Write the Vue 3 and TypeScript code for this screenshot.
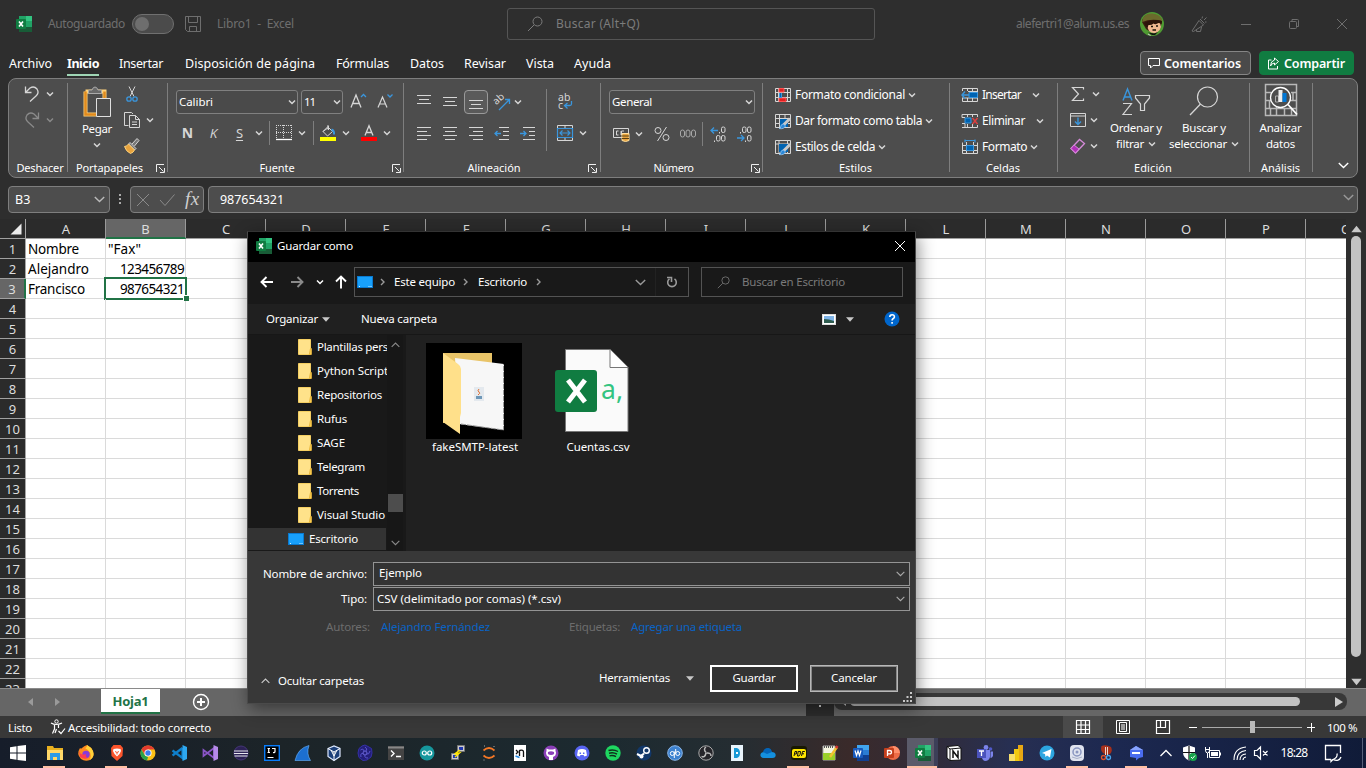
<script setup lang="ts">
import { h } from 'vue'
import type { Directive, FunctionalComponent } from 'vue'

/* Icon drawings, keyed by name: [viewBox width, viewBox height, markup] */
const art: Record<string, [number, number, string]> = {
  excel: [16, 16, '<g stroke="none"><path fill="#21a366" d="M3 0h13v5H3z"/><path fill="#33c481" d="M10 0h6v5h-6z"/><path fill="#107c41" d="M3 5h7v6H3z"/><path fill="#21a366" d="M10 5h6v6h-6z"/><path fill="#185c37" d="M3 11h13v5H3z"/><rect y="3" width="10" height="10" rx="1" fill="#107c41"/></g><path d="M3 5.500l4 5M7 5.500l-4 5" stroke="#fff" stroke-width="1.600"/>'],
  save: [16, 16, '<path d="M.5.5h15v15H2.500l-2-2zM3.500.5v6h9v-6M4.500 15.500v-5h7v5"/>'],
  search: [16, 16, '<circle cx="10.500" cy="5.500" r="4.500"/><path d="M7 9L1 15"/>'],
  horn: [16, 16, '<path d="M1 15L8 4.500l4.500 4.500L2.500 15.500zM5.500 14v1.500h4l1-4.500M9 3l4.500 4.500M11 2.500l.5-2M13 4l2.500-2.500M14 6h1.500"/>'],
  min: [12, 12, '<path d="M1 6.500h10"/>'],
  restore: [12, 12, '<rect x="1.500" y="3.500" width="7" height="7" rx="1"/><path d="M4 3.500v-2h5.500q1 0 1 1V8.500H9"/>'],
  close: [12, 12, '<path d="M1 1l10 10M11 1L1 11"/>'],
  comment: [12, 12, '<path d="M.5 1.500h11v7H5l-2.500 2.500v-2.500h-2z"/>'],
  share: [13, 13, '<path d="M4.500 3H1.500v9h9V9M7.500 1l4 3.500-4 3.500V6Q5 6 3.500 9q0-5 4-6z"/>'],
  chev: [8, 6, '<path d="M1 1.500l3 3 3-3" stroke-width="1.500"/>'],
  chevBig: [11, 7, '<path d="M.8 1l4.700 4.600L10.200 1" stroke-width="1.400"/>'],
  undo: [16, 16, '<path d="M1.500.5v6h6M1.500 6.500L6 2Q10-.5 13 3q2.500 4-1 7l-6 5.500" stroke-width="1.300"/>'],
  redo: [16, 16, '<path d="M14.500.5v6h-6M14.500 6.500L10 2Q6-.5 3 3q-2.500 4 1 7l6 5.500" stroke-width="1.300"/>'],
  paste: [30, 32, '<path d="M3.500 5.500v23h11M22.500 14V5.500h-19" stroke="#ffd27a" stroke-width="4"/><path d="M3.500 5.500v23h11M22.500 12V5.500" stroke="#e08a1e" stroke-width="2.500"/><path d="M6.500 7.500V5q0-1 1-1H10q1-3 3-3t3 3h2.500q1 0 1 1v2.500z" fill="#6a6a6a" stroke="#aaa"/><path d="M14.500 12.500h14v18h-14z" fill="#4d4d4d" stroke="#e0e0e0"/>'],
  cut: [16, 16, '<path d="M5 .5l5 10M11 .5l-5 10"/><g stroke="#3a96dd" stroke-width="1.300"><circle cx="5" cy="13" r="2.200"/><circle cx="11" cy="13" r="2.200"/></g>'],
  copy: [16, 16, '<path d="M4.500 13.500H.5V.5h7l1.500 1.500M5.500 3.500h6l4 4v8h-10zM11.500 3.500v4h4M8 10h5M8 12.500h5"/>'],
  brush: [16, 16, '<path d="M8 6l5-5.500 2 2L10.500 8M6 4.500l6 6-1.500 1.500L4.500 6z" fill="#777"/><path d="M4.500 6Q3 8.500.5 8.500q1.500 5 6 7 3-1 4-3.500z" fill="#e8a33d" stroke="#ffd27a"/>'],
  launch: [9, 9, '<path d="M8 .5H.5V8M3 3l4.500 4.500M8.500 4v4.500H4" stroke="#eee"/>'],
  growA: [17, 16, '<path d="M1 14.500L6 2l5 12.500M2.700 10.500h6.600" stroke-width="1.300"/><path d="M11 4l2.500-2.500L16 4" stroke="#3a96dd" stroke-width="1.300"/>'],
  shrinkA: [16, 16, '<path d="M1 14.500L5.500 4 10 14.500M2.500 11h6" stroke-width="1.200"/><path d="M10.500 1.500L13 4l2.500-2.500" stroke="#3a96dd" stroke-width="1.300"/>'],
  borders: [16, 16, '<g stroke-dasharray="1 1"><path d="M0 .5h16M0 7.500h16M.5 0v14M7.500 0v14M15.500 0v14"/></g><path d="M0 14.500h16" stroke="#fff" stroke-width="1.300"/>'],
  fill: [16, 16, '<path d="M3 6.500L8.500 1v4M8.500 2.500l4 4-5 4.500-4.500-4.500zM8 0v4.500"/><path d="M11.500 4.500q3 1 2.500 5" stroke="#3a96dd" stroke-width="2"/><path d="M0 14h16" stroke="#ff0" stroke-width="4"/>'],
  fontColor: [16, 16, '<path d="M4 10.500L8 .8l4 9.700M5.400 7.500h5.200" stroke-width="1.300"/><path d="M0 14h16" stroke="#f00" stroke-width="4"/>'],
  aTop: [16, 16, '<path d="M1 1.500h14M3 5.500h10M1 9.500h14"/>'],
  aMid: [16, 16, '<path d="M1 3.500h14M3 7.500h10M1 11.500h14"/>'],
  aBot: [16, 16, '<path d="M1 6.500h14M3 10.500h10M1 14.500h14"/>'],
  left: [16, 16, '<path d="M1 1.500h14M1 5.500h10M1 9.500h14M1 13.500h10"/>'],
  center: [16, 16, '<path d="M1 1.500h14M3 5.500h10M1 9.500h14M3 13.500h10"/>'],
  right: [16, 16, '<path d="M1 1.500h14M5 5.500h10M1 9.500h14M5 13.500h10"/>'],
  outdent: [16, 16, '<path d="M5 1.500h10M9 5.500h6M9 9.500h6M5 13.500h10"/><path d="M1 7.500h6M3.500 5L1 7.500 3.500 10" stroke="#3a96dd" stroke-width="1.300"/>'],
  indent: [16, 16, '<path d="M3 1.500h12M9 5.500h6M9 9.500h6M3 13.500h12"/><path d="M0 7.500h6M3.500 5L6 7.500 3.500 10" stroke="#3a96dd" stroke-width="1.300"/>'],
  orient: [18, 18, '<text x="1" y="10" transform="rotate(-42 5 8)" font-size="10" fill="#d6d6d6" stroke="none">ab</text><path d="M6 17L16.500 6.500M12 6.500h4.500V11" stroke="#3a96dd" stroke-width="1.300"/>'],
  wrap: [16, 18, '<g font-size="10.500" fill="#d6d6d6" stroke="none"><text x="1" y="8">ab</text><text x="1" y="16">c</text></g><path d="M14.500 8v3q0 1.500-2 1.500H7.500M10.500 10l-3 2.500 3 3" stroke="#3a96dd" stroke-width="1.300"/>'],
  merge: [16, 16, '<path d="M.5 3V.5h15V3M8 0v3M.5 12v3.500h15V12M8 12v3.500"/><path d="M.5 3.500h15v9H.5zM3 8h10M5.500 5.500L3 8l2.500 2.500M10.500 5.500L13 8l-2.500 2.500" stroke="#3a96dd" stroke-width="1.200"/>'],
  money: [17, 16, '<path d="M.5 2.500h15v9H.5zM5.500 5h-2v4h2M8 5v4M11 5H8.500v4"/><path d="M9 7.500h7v7q-3.500 2-7 0z" fill="#e8a33d" stroke="#ffe0a0"/><path d="M9 10h7M9 12.500h7" stroke="#5a4010"/>'],
  percent: [16, 16, '<circle cx="4" cy="4.500" r="3"/><circle cx="12" cy="11.500" r="3"/><path d="M12.500 1l-9 14"/>'],
  thousand: [16, 10, '<g stroke="#a8a8a8"><rect x=".5" y="1" width="4" height="7" rx="2"/><rect x="6" y="1" width="4" height="7" rx="2"/><rect x="11.500" y="1" width="4" height="7" rx="2"/></g>'],
  incDec: [16, 16, '<path d="M1 4.500h7M4 1.500l-3 3 3 3" stroke="#3a96dd" stroke-width="1.300"/><rect x="11.500" y="1" width="3.500" height="5.500" rx="1.500"/><rect x="6.500" y="9.500" width="3.500" height="5.500" rx="1.500"/><rect x="11.500" y="9.500" width="3.500" height="5.500" rx="1.500"/><path d="M9.500 6v1.500M4.500 14.500v1.500"/>'],
  decDec: [16, 16, '<path d="M1 12h7M5 9l3 3-3 3" stroke="#3a96dd" stroke-width="1.300"/><rect x="6.500" y="1" width="3.500" height="5.500" rx="1.500"/><rect x="11.500" y="1" width="3.500" height="5.500" rx="1.500"/><rect x="11.500" y="9.500" width="3.500" height="5.500" rx="1.500"/><path d="M4.500 6v1.500M9.500 14.500v1.500"/>'],
  cond: [16, 16, '<path d="M.5 1.500h15v13H.5zM3.500 1v14M12.500 1v14M0 5.500h16M0 10.500h16"/><path d="M4 1.500h5v3.500H4zM4 11h7v3.500H4z" fill="#e02020" stroke="#ff5050"/><path d="M4.500 6v4.500h2V6" fill="#0063b1" stroke="#3a96dd"/>'],
  table: [16, 16, '<path d="M.5 1.500h15v13H.5zM4.500 1v14M10 1v14M0 5.500h16M0 10.500h16"/><path d="M5 6h8v8H5z" fill="#0063b1" stroke="none"/><path d="M15 5.500L8.500 12" stroke="#c8c8c8" stroke-width="3"/><path d="M8.500 11q-3 0-3 3.500l-1.500 1q5 1 6.500-2.500z" fill="#2b88d8" stroke="#9fd0f8" stroke-width=".7"/>'],
  cellStyle: [16, 16, '<path d="M.5 1.500h15v13H.5zM4 1v14M12.500 1v14M0 5h16"/><path d="M4 5h9v8H4z" fill="#0063b1" stroke="none"/><path d="M15 5.500L8.500 12" stroke="#c8c8c8" stroke-width="3"/><path d="M8.500 11q-3 0-3 3.500l-1.500 1q5 1 6.500-2.500z" fill="#2b88d8" stroke="#9fd0f8" stroke-width=".7"/>'],
  insert: [16, 16, '<path d="M.5 4V1.500h15v13H.5V11M5.500 1v3M10.500 1v13M5.500 11v3.500M0 11h16M6 4.500h10"/><path d="M7 5.500h8.500v5H7z" fill="#0063b1" stroke="#3a96dd"/><path d="M0 8h7M3 4.500L0 8l3 3.500" stroke="#3a96dd" stroke-width="1.400"/>'],
  del: [16, 16, '<path d="M0 4.500h3M0 1.500v3M0 10.500h3v4M0 1.500h15.500V4M0 14.500h15.500V12M5.500 1v3M10.500 1v3M5.500 11v4M10.500 11v4"/><path d="M3 5h6v5H3z" fill="#0063b1" stroke="#3a96dd"/><path d="M10.500 5l5 6M15.500 5l-5 6" stroke="#e04040" stroke-width="1.400"/>'],
  format: [16, 16, '<path d="M.5 3.500v11h15v-11M4.500 3v12M11.500 3v12M0 6.500h16M0 11.500h16"/><path d="M4.500 6.500h7v5h-7z" fill="#0063b1" stroke="#3a96dd"/><path d="M3 .5v3M13 .5v3M3 1.500h10" stroke="#3a96dd" stroke-width="1.200"/>'],
  sum: [16, 16, '<path d="M13.500 3.500v-2h-11L8.500 8l-6 6.500h11v-2" stroke-width="1.200"/>'],
  down: [16, 16, '<path d="M.5 1.500h15v13H.5zM.5 4h15"/><path d="M8 5.500v7M5 9.500l3 3 3-3" stroke="#3a96dd" stroke-width="1.400"/>'],
  eraser: [16, 16, '<path d="M1 10.500L9.500 1.500l5 4-9 9.500z" stroke="#d48ad8" stroke-width="1.300"/><path d="M1 10.500l3-3.500 5 4-3.500 4z" fill="#b030b8" stroke="#d48ad8"/>'],
  sort: [30, 28, '<path d="M2 12.500L6.500 1 11 12.500M3.500 9h6" stroke="#3a96dd" stroke-width="1.400"/><path d="M2 15.500h8.500L2 26.500h9" stroke-width="1.200"/><path d="M14.500 7.500h14v2.500l-5 6v6.500h-4V16l-5-6z" stroke-width="1.200"/>'],
  find: [30, 30, '<circle cx="18.500" cy="11" r="10" stroke-width="1.200"/><path d="M11.500 18L1 29" stroke-width="1.300"/>'],
  analyze: [34, 34, '<path d="M1.500 1.500h31v31h-31zM1 9.500h6M27 9.500h6M1 17.500h6M26 17.500h7M1 25.500h32M6.500 25v7M12.500 24v8M20.500 26v6M27.500 26v6M5.500 18v8M29 10v8" stroke="#b8b8b8" stroke-width="1.500"/><circle cx="16.500" cy="14.500" r="10" fill="#4d4d4d" stroke="#fff" stroke-width="1.300"/><path d="M11.500 13h3v6h-3z" stroke="#aaa"/><path d="M14.500 7h4v12h-4z" fill="#eee" stroke="none"/><path d="M18.500 10h4v9h-4z" fill="#0078d7" stroke="none"/><path d="M24 21.500l9 10" stroke="#fff" stroke-width="1.800"/>'],
  check: [16, 14, '<path d="M1 7l5 5.500L15.500 1.500"/>'],
  cross: [14, 14, '<path d="M1 1l12 12M13 1L1 13"/>'],
  fx: [16, 18, '<text x="1" y="14" font-size="19" font-style="italic" fill="#d0d0d0" stroke="none">fx</text>'],
  corner: [12, 12, '<path d="M11.500.5v11H.5z" fill="#ececec" stroke="none"/>'],
  back: [14, 14, '<path d="M13 7H1.500M6.500 2l-5 5 5 5" stroke-width="1.900"/>'],
  fwd: [14, 14, '<path d="M1 7h11.500M7.500 2l5 5-5 5" stroke-width="1.900"/>'],
  up: [14, 14, '<path d="M7 13.500V1.500M2 6.500l5-5 5 5" stroke-width="1.900"/>'],
  gt: [5, 8, '<path d="M1 1l3 3-3 3" stroke-width="1.400"/>'],
  monitor: [16, 12, '<rect x=".5" y=".5" width="15" height="11" fill="#18a0fb" stroke="#0a7ad0"/><path d="M2 10.500h1M11.500 10.500h1M13.500 10.500h1" stroke="#cfefff"/>'],
  refresh: [12, 12, '<path d="M3.500 2.800A4.300 4.300 0 1 0 8.500 2.800M1 1.500h4.500V6" stroke-width="1.600"/>'],
  tri: [8, 5, '<path d="M0 .3h8L4 4.800z" fill="#c8c8c8" stroke="none"/>'],
  view: [14, 11, '<rect x=".5" y=".5" width="13" height="10" fill="#fff" stroke="#ddd"/><path d="M2 2h10v7H2z" fill="#7fb4e8" stroke="none"/><path d="M2 5q5 0 10 2v2H2z" fill="#2f5d50" stroke="none"/>'],
  help: [16, 16, '<circle cx="8" cy="8" r="7.500" fill="#0066cc" stroke="none"/><path d="M5.800 6q0-2.300 2.300-2.300T10.400 6Q10.400 7 9 7.800 8.100 8.300 8.100 9.500M8.100 11v1.700" stroke="#fff" stroke-width="1.600"/>'],
  folder: [14, 16, '<path d="M.5.500h12v15H.500z" fill="#ffe28a" stroke="#f5cf62"/><path d="M12.500 9.500h.8v6h-2z" fill="#ffd45a" stroke="#eab93f"/>'],
  bigFolder: [96, 96, '<path d="M0 0h96v96H0z" fill="#000" stroke="none"/><g stroke="none"><path d="M17 10h49v70H17z" fill="#e9c468"/><path d="M29 15l49 6v66l-45-6z" fill="#f7f7f7"/><path d="M17 10l15 11q3 2 3 5v44l-1 4v17L17 79z" fill="#ffe08a"/><path d="M48 44h10v14H48z" fill="#e4e9ee"/><path d="M50 53h6v3h-6z" fill="#6f98b8"/></g><path d="M53 46q-2 2 0 3t-1 3" stroke="#e07030"/><path d="M35 81l42.500 6V21" stroke="#999" stroke-dasharray="5 1"/>'],
  csv: [80, 90, '<path d="M13.500 2.500H58L76 20.500v64H13.500z" fill="#fafafa" stroke="#777"/><path d="M58 2.500v18h18" fill="#fff" stroke="#777"/><rect x="3" y="23" width="42" height="42" rx="3" fill="#107c41" stroke="none"/><path d="M16 33l17 22M33 33L16 55" stroke="#fff" stroke-width="5"/><text x="49" y="52" font-size="27" textLength="22" lengthAdjust="spacingAndGlyphs" fill="#33c481" stroke="none">a,</text>'],
  grip: [10, 10, '<path d="M7 0h2v2H7zM7 4h2v2H7zM3.500 4h2v2h-2zM7 8h2v2H7zM3.500 8h2v2h-2zM0 8h2v2H0z" fill="#c8c8c8" stroke="none"/>'],
  triL: [5, 8, '<path d="M5 0v8L0 4z" fill="currentColor" stroke="none"/>'],
  triR: [5, 8, '<path d="M0 0v8l5-4z" fill="currentColor" stroke="none"/>'],
  plus: [18, 18, '<circle cx="9" cy="9" r="7.500" stroke-width="1.400"/><path d="M9 5v8M5 9h8" stroke-width="2"/>'],
  access: [16, 16, '<circle cx="6.500" cy="2.500" r="1.700"/><path d="M1 4q5 3 11 0M4.500 6v4l-2 4.500M8.500 6v3M6.500 10l-1.500 4M8.500 12l2.500 2.500 4-5" stroke-width="1.200"/>'],
  vGrid: [14, 14, '<path d="M.5.5h13v13H.5zM5 0v14M9.500 0v14M0 5h14M0 9.500h14" stroke-width="1.200"/>'],
  vPage: [14, 14, '<path d="M.5.5h13v13H.5zM3.500 2.500h7v9h-7zM5 5h4M5 7h4M5 9h4"/>'],
  vBreak: [14, 14, '<path d="M.5.5h13v13H.5zM4.500.5v7h5v-7M.5 7.500h4" stroke-width="1.200"/>'],
  win: [16, 16, '<path d="M0 2.200l6.500-.9v6.200H0zM7.500 1.100L16 0v7.500H7.500zM0 8.500h6.500v6.200L0 13.800zM7.500 8.500H16V16l-8.500-1.100z" fill="#fff" stroke="none"/>'],
  explorer: [16, 16, '<g stroke="none"><path d="M0 1h6l1 2h9v12H0z" fill="#e8b020"/><path d="M0 5h16v10H0z" fill="#ffd869"/><path d="M3 8h10v7h-3v-3H6v3H3z" fill="#2b9be8"/></g>'],
  firefox: [16, 16, '<g stroke="none"><path d="M2 3q1 1 2 0 2-2 5-3 4 2 6 6 2 6-3 9-5 2-9-1-5-5-1-11z" fill="#ff8a1e"/><path d="M9 0q4 2 6 6 2 6-3 9 3-8-5-12 2 0 2-3z" fill="#ffd23a"/><circle cx="8" cy="9.500" r="3.700" fill="#8a3ad8"/><path d="M1 5q1 6 7 4-1 3 2 4-4 2-8-1z" fill="#ff3d50"/></g>'],
  brave: [16, 16, '<path d="M4.500 0h7L14 3l-.5 8L8 16l-5.500-5L2 3z" fill="#fb542b" stroke="none"/><path d="M8 3.500L4.500 4l-.5 2 1.500 3L8 11.500 10.500 9 12 6l-.5-2z" fill="#fff" stroke="none"/><path d="M6 6.500l2 1 2-1M8 7.500v2" stroke="#fb542b"/>'],
  chrome: [16, 16, '<g stroke="none"><circle cx="8" cy="8" r="7.500" fill="#fbc116"/><path d="M1.500 4.300A7.500 7.500 0 0 1 14.600 4.500H8L4.700 9.500z" fill="#e33b2e"/><path d="M1.300 4.500L5 10.500 8 12l-1 3.500A7.500 7.500 0 0 1 1.300 4.500z" fill="#2aa24c"/><circle cx="8" cy="8" r="3.600" fill="#fff"/><circle cx="8" cy="8" r="2.700" fill="#3b7ded"/></g>'],
  vscode: [16, 16, '<path d="M11.500 3v10L1.500 5.500M11.500 3L1.500 10.500" stroke="#0f80cc" stroke-width="2.200"/><path d="M11.500 0L16 2v12l-4.500 2z" fill="#2ea8f0" stroke="none"/>'],
  vs: [16, 16, '<path d="M12 3v10L1.500 5v6z" stroke="#8a55c8" stroke-width="1.800"/><path d="M11.500 0L16 2v12l-4.500 2z" fill="#b58ae8" stroke="none"/>'],
  eclipse: [16, 16, '<circle cx="8" cy="8" r="7" fill="#2c2255" stroke="#443577"/><path d="M1 6h14M1 8.500h14M1.500 11h13" stroke="#e8e8f0" stroke-width="1.200"/>'],
  idea: [16, 16, '<rect x=".7" y=".7" width="14.600" height="14.600" fill="#000" stroke="#087cfa" stroke-width="1.400"/><path d="M3.500 3.500H6M4.700 3.500v4M3.500 7.500H6M8 3.500h3v3.200q0 1-2 .8M3.500 12.500h6" stroke="#fff" stroke-width="1.200"/>'],
  shark: [16, 16, '<path d="M0 15.500Q3 3 14 .5q-3 8 1.500 15z" fill="#1c6fd0" stroke="#69b5ff" stroke-width=".6"/>'],
  vbox: [16, 16, '<path d="M2 3.500L8 1l6 2.500v8L8 15.500l-6-4z" fill="#1c3f78" stroke="#dce8ff" stroke-width="1.200"/><path d="M2 3.500L8 7l6-3.500M8 7v8.500M5 5l3 6 3-6" stroke="#fff"/>'],
  flower: [16, 16, '<path d="M8 0l3 1.500 3.500 2L15 8l-1 4-4 3-4 .5L2 12.500 1 8l1-4.500L5 1z" fill="#241f7a" stroke="#3530a8"/><circle cx="8" cy="8" r="2" stroke="#6a66d8"/><path d="M8 2q3 2 1 4M13 6q-1 4-3.500 3M11 13q-4 0-3-3M4 12q-1-4 2-3.500M3.500 5q3-2 3.500 1" stroke="#5a55d0"/>'],
  term: [16, 16, '<path d="M0 1h16v14H0z" fill="#444" stroke="none"/><path d="M0 2.500h16" stroke="#888" stroke-width="2"/><path d="M3 5.500l3 3-3 3M8 11.500h5" stroke="#fff" stroke-width="1.400"/>'],
  arduino: [16, 16, '<circle cx="8" cy="8" r="7.500" fill="#16979d" stroke="none"/><circle cx="5.300" cy="8" r="2" stroke="#fff" stroke-width="1.200"/><circle cx="10.700" cy="8" r="2" stroke="#fff" stroke-width="1.200"/>'],
  putty: [16, 16, '<path d="M7.500.5h7v6h-7zM1.500 8.500h7v6h-7z" fill="#ccc" stroke="#777"/><path d="M9 2h4v3H9zM3 10h4v3H3z" fill="#2038b0" stroke="none"/><path d="M10 5L4.500 9l5-1L5 12" stroke="#ffe600" stroke-width="1.400"/>'],
  jupyter: [16, 16, '<path d="M2.500 5.500q5.500-5 11 0M2.500 10.500q5.500 5 11 0" stroke="#f37726" stroke-width="1.700"/><path d="M3 1h1M12.500 1.500h1M2.500 15h1" stroke="#aaa"/>'],
  jn: [16, 16, '<path d="M2 0h12v16H2z" fill="#fff" stroke="none"/><path d="M7.500 11V5M7.500 5.500q4-1 4 1.500v5M4 5l2 2-2 2" stroke="#111" stroke-width="1.300"/><path d="M3.500 11l4 1.500" stroke="#1e88e5" stroke-width="1.500"/>'],
  github: [16, 16, '<circle cx="8" cy="8" r="7.500" fill="#8a3fb8" stroke="none"/><path d="M6 15v-3q-3-1-3-4.500l.5-1.500V3.500L6 4.500h4l2.500-1V6l.5 1.500q0 3.500-3 4.500v3z" fill="#fff" stroke="none"/><path d="M5 7q3-1.500 6 0 1 3-3 3T5 7z" fill="#8a3fb8" stroke="none"/>'],
  discord: [16, 16, '<circle cx="8" cy="8" r="7.500" fill="#5865f2" stroke="none"/><path d="M4 5q4-2 8 0l1 5.500-2.500 1-1-1.500h-3l-1 1.500-2.500-1z" fill="#fff" stroke="none"/><path d="M6.300 7.500v1.500M9.700 7.500v1.500" stroke="#5865f2" stroke-width="1.500"/>'],
  spotify: [16, 16, '<circle cx="8" cy="8" r="7.700" fill="#1ed760" stroke="none"/><path d="M3.500 5.500q5-1.500 9.500 1M4 8.200q4.500-1.200 8 1M4.500 10.800q3.500-1 6.500.8" stroke="#10301c" stroke-width="1.400"/>'],
  steam: [16, 16, '<circle cx="8" cy="8" r="7.500" fill="#12386a" stroke="none"/><circle cx="10.500" cy="5.500" r="2.800" fill="#12386a" stroke="#fff" stroke-width="1.400"/><path d="M1 9l4 2 3-2.500" stroke="#fff" stroke-width="2"/><circle cx="5.500" cy="11.500" r="2" fill="#fff" stroke="none"/>'],
  qb: [16, 16, '<circle cx="8" cy="8" r="7.300" fill="#3d82d0" stroke="#8cb8ea"/><circle cx="5.300" cy="8.500" r="2" stroke="#fff"/><circle cx="10.700" cy="8.500" r="2" stroke="#fff"/><path d="M7.300 6.500V13M8.700 4v5" stroke="#fff"/>'],
  obs: [16, 16, '<circle cx="8" cy="8" r="7.200" fill="#26252a" stroke="#aaa"/><path d="M8 2q-3 2 0 5.500M13 11Q13 7.500 8.500 8M3.500 11.500q3.500 1.500 4.500-3.500" stroke="#bbb" stroke-width="1.500"/>'],
  dd: [16, 16, '<path d="M2 0h12v16H2z" fill="#e8f4fc" stroke="none"/><path d="M5 3h3q3 1 3 5t-3 5H5z" fill="#1899d6" stroke="none"/><path d="M7 8h2" stroke="#fff" stroke-width="2"/>'],
  cloud: [16, 16, '<path d="M3.500 13q-3.500-.5-3-3.500Q1 7 4 7q1-4 4.500-3.500Q11 4 11.500 7q4 0 4.200 3 0 3-3.200 3z" fill="#1490df" stroke="none"/><path d="M3 7q1-4 5-4 3 0 4 4l-5 2z" fill="#0364b8" stroke="none"/>'],
  pdf: [16, 16, '<rect x="0" y="1" width="16" height="14" rx="3" fill="#191900" stroke="none"/><rect x="1" y="4" width="14" height="9" rx="2" fill="#ffe600" stroke="none"/><path d="M3 11l1-4.500h1.800l-.5 2.500H4M7.200 6.500L6.500 11H8q1.500-1 1.500-4.500zM10.500 11l1-4.500h2.300M11 8.800h2" stroke="#111"/>'],
  note: [16, 16, '<path d="M1 1h12v14H1z" fill="#f4f4e0" stroke="#aaa"/><path d="M1 8h12v7H1z" fill="#9ad02a" stroke="none"/><path d="M2 2h10" stroke="#555" stroke-width="2" stroke-dasharray="1 1"/><path d="M15 2L8 12" stroke="#f2c230" stroke-width="2.500"/><path d="M15.500 1L14 3" stroke="#d03030" stroke-width="2.500"/>'],
  word: [16, 16, '<g stroke="none"><path fill="#41a5ee" d="M4 0h12v5H4z"/><path fill="#2b7cd3" d="M4 5h12v5H4z"/><path fill="#103f91" d="M4 10h12v6H4z"/><rect y="3" width="10" height="10" rx="1" fill="#185abd"/></g><path d="M2 5.500l1.500 5L5 6l1.500 4.500L8 5.500" stroke="#fff" stroke-width="1.200"/>'],
  ppt: [16, 16, '<circle cx="9" cy="8" r="7" fill="#ed6c47" stroke="none"/><path d="M9 1v7h7a7 7 0 0 0-7-7z" fill="#ff8f6b" stroke="none"/><rect y="3" width="10" height="10" rx="1" fill="#c43e1c" stroke="none"/><path d="M3.500 11V5.500h2q2 0 2 1.700t-2 1.700h-2" stroke="#fff" stroke-width="1.300"/>'],
  notion: [16, 16, '<path d="M1 1.500l11-1L15 3v12l-11 .5L1 13z" fill="#fff" stroke="#111"/><path d="M1 1.500L4 4v11.500M4 4l11-1" stroke="#111"/><path d="M7 13V6l5 6.500V5.500" stroke="#111" stroke-width="1.500"/>'],
  teams: [16, 16, '<circle cx="13.500" cy="4" r="1.800" fill="#5059c9" stroke="none"/><circle cx="9" cy="2.500" r="2.400" fill="#7b83eb" stroke="none"/><path d="M5 5h8v7q-1 4-5 4-3-1-3-4zM13.500 6.500H16V11q-1 2-2.500 2z" fill="#7b83eb" stroke="none"/><path d="M0 4h9v9H0z" fill="#4b53bc" stroke="none"/><path d="M2 6h5M4.500 6v5" stroke="#fff" stroke-width="1.300"/>'],
  pbi: [16, 16, '<path d="M10 0h5v16h-5z" fill="#e8a813" stroke="none"/><path d="M6 4h5v12H6z" fill="#f2c811" stroke="none"/><path d="M1 9h6v7H1z" fill="#f8df6a" stroke="none"/>'],
  telegram: [16, 16, '<circle cx="8" cy="8" r="7.500" fill="#2ca5e0" stroke="none"/><path d="M3 8l9.500-4L11 12.500 8 10.500 6.500 12 6 9z" fill="#fff" stroke="none"/>'],
  shieldApp: [16, 16, '<rect x="1" width="14" height="16" rx="4" fill="#dfe3ee" stroke="none"/><circle cx="8" cy="7" r="4" stroke="#8a96c0" stroke-width="1.500"/><circle cx="8" cy="7" r="1.500" fill="#8a96c0" stroke="none"/><path d="M3 12q5 3 10 0" stroke="#a8b0c8"/>'],
  snip: [16, 16, '<path d="M3.500 1Q8-1 13 2q2 4-1 7l-4 1-3-2q-3-3-1.500-7z" fill="#a8301a" stroke="none"/><path d="M7.500 2v8M9.500 2v8" stroke="#e8d8d0"/><circle cx="5.500" cy="12.500" r="2" stroke="#e0502a" stroke-width="1.300"/><circle cx="10.500" cy="12.500" r="2" stroke="#4aa3e8" stroke-width="1.300"/>'],
  chatApp: [16, 16, '<path d="M8 1l7 4v7l-4 1-3 2.500V13l-6-1V5z" fill="#4a6cf0" stroke="none"/><path d="M8 1l7 4H2z" fill="#88a4ff" stroke="none"/><path d="M4 8h8" stroke="#fff" stroke-width="2"/>'],
  caretUp: [14, 8, '<path d="M1.500 7L7 1.500 12.500 7" stroke-width="1.300"/>'],
  defender: [16, 16, '<path d="M8 .5l6 2v5q0 5-6 8-6-3-6-8v-5z" fill="#fff" stroke="none"/><path d="M8 1v14M2 7.500h12" stroke="#111" stroke-width="1.200"/><circle cx="12" cy="12" r="4" fill="#16a34a" stroke="none"/><path d="M10 12l1.500 1.500 2.500-3" stroke="#fff"/>'],
  battery: [16, 14, '<path d="M4.500 4.500h10v7h-10zM15.500 6.500v3M2.500 7V12M.5 1v3q0 3 2 3t2-3V1M1 3.500h3.500" /><path d="M6 6h7v4H6z" fill="#fff" stroke="none"/>'],
  wifi: [14, 14, '<path d="M1 14Q1 2 13 1M4 14Q4 5.500 13 4.500M7 14q0-5.500 6-6M10 14q0-2.500 3-3" stroke-width="1.100"/>'],
  mute: [15, 14, '<path d="M.5 4.500H3L6.500 1v12L3 9.500H.5zM9 5l4.500 4.500M13.500 5L9 9.500" stroke-width="1.200"/>'],
  notif: [18, 18, '<path d="M7 15.500H1.500V1.500h15V9M7 15.500v2l2-2" stroke-width="1.300"/><path d="M13 9.500q1 4-4 6 6 2.500 8-2.500" stroke-width="1.300"/>'],
  avatar: [24, 24, '<g stroke="none"><circle cx="12" cy="12" r="12" fill="#4f9a32"/><path d="M2 10q1-8 10-8 8 1 10 8l-2 7q-9 5-14 0z" fill="#3a1c10"/><path d="M6 12q6-3 14-1l1 4q-1 4-4 5.500-5 1.500-8-1.500z" fill="#f0b890"/><path d="M2 10Q3 1 12 1.500T22.500 9Q12 6 2 10z" fill="#6b6a2c"/><path d="M4 11q8-5 18-2l-.5 3q-2-1-3-1-3 2-5 .5-2 2-5 1.500l-1 3q-2-1-3.500-5z" fill="#2c140a"/><path d="M8 20.500l4 2.500h3l3-3-4 1.500z" fill="#111"/></g><path d="M11 14.500h2M16 14h2M12.500 18h3.500" stroke="#1a1208" stroke-width="1.400"/><path d="M8 22l2.500 1.500" stroke="#ccc"/>'],
}

interface IcoProps { n: string; w?: number; t?: number }
const Ico: FunctionalComponent<IcoProps> = (p) => {
  const [w, hh, inner] = art[p.n]
  const width = p.w ?? w
  return h('svg', {
    width, height: p.t ?? (width * hh) / w, viewBox: `0 0 ${w} ${hh}`,
    fill: 'none', stroke: 'currentColor', 'stroke-width': 1, preserveAspectRatio: 'none', innerHTML: inner,
  })
}
Ico.props = ['n', 'w', 't']

/* Tracks a label in or out so that it fills the given width */
const vFit: Directive<HTMLElement, number> = {
  mounted(el, { value }) {
    const range = document.createRange()
    range.selectNodeContents(el)
    const n = (el.textContent ?? '').length
    el.style.letterSpacing = `${((value - range.getBoundingClientRect().width) / n).toFixed(3)}px`
    el.style.width = `${value}px`
  },
}

const tabs: [string, number, number][] = [
  ['Archivo', 43, 15], ['Inicio', 32, 20], ['Insertar', 44, 22], ['Disposición de página', 130, 21],
  ['Fórmulas', 53, 21], ['Datos', 34, 20], ['Revisar', 42, 20], ['Vista', 28, 20], ['Ayuda', 37, 0],
]
const styleCmds: [string, string, number][] = [
  ['cond', 'Formato condicional', 110], ['table', 'Dar formato como tabla', 127], ['cellStyle', 'Estilos de celda', 80],
]
const cellCmds: [string, string, number, number][] = [
  ['insert', 'Insertar', 39, 8], ['del', 'Eliminar', 43, 8], ['format', 'Formato', 45, 0],
]
const columns = 'ABCDEFGHIJKLMNOPQ'.split('')
const rows = Array.from({ length: 23 }, (_, i) => i + 1)
const cells: Record<string, [string, number]> = {
  A1: ['Nombre', 51], B1: ['"Fax"', 33], A2: ['Alejandro', 61], B2: ['123456789', 64], A3: ['Francisco', 57], B3: ['987654321', 64],
}
const folders: [string, number][] = [
  ['Plantillas pers', 71], ['Python Script', 71], ['Repositorios', 65], ['Rufus', 30], ['SAGE', 28],
  ['Telegram', 48], ['Torrents', 42], ['Visual Studio', 68],
]
const apps = [
  'explorer', 'firefox', 'brave', 'chrome', 'vscode', 'vs', 'eclipse', 'idea', 'shark', 'vbox', 'flower', 'term',
  'arduino', 'putty', 'jupyter', 'jn', 'github', 'discord', 'spotify', 'steam', 'qb', 'obs', 'dd', 'cloud', 'pdf',
  'note', 'word', 'ppt', 'excel', 'notion', 'teams', 'pbi', 'telegram', 'shieldApp', 'snip', 'chatApp',
]
const running = ['explorer', 'brave', 'pdf', 'excel', 'shieldApp', 'chatApp']
</script>

<template>
  <div class="screen">
    <header class="title">
      <Ico n="excel" class="logo" />
      <span v-fit="77">Autoguardado</span>
      <div class="toggle"><i></i></div>
      <Ico n="save" class="save" />
      <span v-fit="77" class="doc">Libro1&nbsp; -&nbsp; Excel</span>
      <div class="find"><Ico n="search" /><span v-fit="84">Buscar (Alt+Q)</span></div>
      <span v-fit="113" class="mail">alefertri1@alum.us.es</span>
      <Ico n="avatar" class="avatar" />
      <Ico n="horn" class="horn" />
      <Ico n="min" class="wbtn" /><Ico n="restore" class="wbtn" /><Ico n="close" class="wbtn" />
    </header>

    <nav class="tabs">
      <span v-for="[t, w, g] in tabs" :key="t" v-fit="w" :class="{ on: t === 'Inicio' }" :style="{ marginRight: g + 'px' }">{{ t }}</span>
      <div class="actions">
        <button class="act"><Ico n="comment" /><b v-fit="77">Comentarios</b></button>
        <button class="act share"><Ico n="share" /><b v-fit="61">Compartir</b></button>
      </div>
    </nav>

    <section class="ribbon">
      <div class="grp undo">
        <div class="body stack">
          <div><Ico n="undo" /><Ico n="chev" /></div>
          <div class="dim"><Ico n="redo" /><Ico n="chev" /></div>
        </div>
        <footer><span v-fit="47">Deshacer</span></footer>
      </div>
      <div class="grp clip">
        <div class="body row">
          <div class="big"><Ico n="paste" /><span v-fit="30">Pegar</span><Ico n="chev" /></div>
          <div class="stack">
            <div><Ico n="cut" /></div>
            <div><Ico n="copy" /><Ico n="chev" /></div>
            <div><Ico n="brush" /></div>
          </div>
        </div>
        <footer><span v-fit="67">Portapapeles</span><Ico n="launch" /></footer>
      </div>
      <div class="grp font">
        <div class="body two">
          <div class="fonts">
            <div class="combo"><span v-fit="34">Calibri</span><Ico n="chev" /></div>
            <div class="combo small"><span v-fit="11">11</span><Ico n="chev" /></div>
            <Ico n="growA" /><Ico n="shrinkA" />
          </div>
          <div class="marks">
            <b>N</b><em>K</em><u>S</u><Ico n="chev" /><i class="bar"></i><Ico n="borders" /><Ico n="chev" /><i class="bar"></i>
            <Ico n="fill" /><Ico n="chev" /><Ico n="fontColor" class="fc" /><Ico n="chev" />
          </div>
        </div>
        <footer><span v-fit="35">Fuente</span><Ico n="launch" /></footer>
      </div>
      <div class="grp align">
        <div class="body row">
          <div class="five">
            <Ico n="aTop" /><Ico n="aMid" /><span class="picked"><Ico n="aBot" /></span>
            <Ico n="orient" /><Ico n="chev" class="oc" />
            <Ico n="left" /><Ico n="center" /><Ico n="right" /><Ico n="outdent" /><Ico n="indent" />
          </div>
          <i class="bar tall"></i>
          <div class="wraps"><Ico n="wrap" /><div><Ico n="merge" /><Ico n="chev" /></div></div>
        </div>
        <footer><span v-fit="53">Alineación</span><Ico n="launch" /></footer>
      </div>
      <div class="grp num">
        <div class="body two">
          <div class="combo"><span v-fit="40">General</span><Ico n="chev" /></div>
          <div class="nums">
            <Ico n="money" /><Ico n="chev" /><Ico n="percent" /><Ico n="thousand" /><i class="bar"></i><Ico n="incDec" /><Ico n="decDec" />
          </div>
        </div>
        <footer><span v-fit="40">Número</span><Ico n="launch" /></footer>
      </div>
      <div class="grp styles">
        <div class="body stack">
          <div v-for="[i, t, w] in styleCmds" :key="i"><Ico :n="i" /><span v-fit="w">{{ t }}</span><Ico n="chev" /></div>
        </div>
        <footer><span v-fit="33">Estilos</span></footer>
      </div>
      <div class="grp cellsg">
        <div class="body stack">
          <div v-for="[i, t, w, g] in cellCmds" :key="i"><Ico :n="i" /><span v-fit="w" :style="{ marginRight: g + 'px' }">{{ t }}</span><Ico n="chev" /></div>
        </div>
        <footer><span v-fit="34">Celdas</span></footer>
      </div>
      <div class="grp edit">
        <div class="body row">
          <div class="stack">
            <div><Ico n="sum" /><Ico n="chev" class="c1" /></div>
            <div><Ico n="down" /><Ico n="chev" /></div>
            <div><Ico n="eraser" /><Ico n="chev" /></div>
          </div>
          <div class="big sort"><Ico n="sort" /><span v-fit="52">Ordenar y</span><p><span v-fit="28">filtrar</span><Ico n="chev" /></p></div>
          <div class="big look"><Ico n="find" /><span v-fit="44">Buscar y</span><p><span v-fit="58">seleccionar</span><Ico n="chev" /></p></div>
        </div>
        <footer><span v-fit="38">Edición</span></footer>
      </div>
      <div class="grp ana">
        <div class="body"><div class="big"><Ico n="analyze" /><span v-fit="42">Analizar</span><p><span v-fit="29">datos</span></p></div></div>
        <footer><span v-fit="39">Análisis</span></footer>
      </div>
      <Ico n="chevBig" class="fold" />
    </section>

    <section class="fbar">
      <div class="box name"><span>B3</span><Ico n="chevBig" /></div>
      <div class="dots"><i></i><i></i><i></i></div>
      <div class="box fxs"><Ico n="cross" /><Ico n="check" /><Ico n="fx" class="fx" /></div>
      <div class="box formula"><span v-fit="64">987654321</span><Ico n="chevBig" /></div>
    </section>

    <main class="sheet">
      <div class="grid">
        <div class="line head">
          <div class="rh"><Ico n="corner" /></div>
          <div v-for="c in columns" :key="c" class="ch" :class="{ sel: c === 'B' }">{{ c }}</div>
        </div>
        <div v-for="r in rows" :key="r" class="line">
          <div class="rh" :class="{ sel: r === 3 }">{{ r }}</div>
          <div v-for="c in columns" :key="c" class="cell" :class="{ num: c === 'B' && r > 1, active: c === 'B' && r === 3 }">
            <span v-if="cells[c + r]" v-fit="cells[c + r][1]">{{ cells[c + r][0] }}</span>
          </div>
        </div>
      </div>
      <div class="vscroll"><Ico n="triL" class="va" /><i></i><Ico n="triL" class="vb" /></div>
    </main>

    <section class="sheets">
      <Ico n="triL" /><Ico n="triR" />
      <div class="stab"><b v-fit="36">Hoja1</b></div>
      <Ico n="plus" class="plus" />
      <div class="split"><i></i></div>
      <div class="hscroll"><Ico n="triL" /><i></i><Ico n="triR" :w="8" :t="10" /></div>
    </section>

    <section class="status">
      <span v-fit="24">Listo</span>
      <Ico n="access" /><span v-fit="143">Accesibilidad: todo correcto</span>
      <div class="views">
        <div class="on"><Ico n="vGrid" /></div><div><Ico n="vPage" /></div><div><Ico n="vBreak" /></div>
      </div>
      <div class="zoom"><i></i><div class="track"><b></b></div><i class="p"></i></div>
      <span v-fit="30">100 %</span>
    </section>

    <section class="taskbar">
      <div class="start"><Ico n="win" /></div>
      <div v-for="(a, i) in apps" :key="a" class="app" :class="{ run: running.includes(a), cur: a === 'excel', slim: i > 32 }"><Ico :n="a" :w="16" :t="16" /></div>
      <div class="tray">
        <Ico n="caretUp" /><Ico n="defender" /><Ico n="battery" /><Ico n="wifi" /><Ico n="mute" />
        <span v-fit="27">18:28</span><Ico n="notif" />
      </div>
    </section>

    <section class="dialog">
      <div class="dtitle"><Ico n="excel" /><span v-fit="76">Guardar como</span><Ico n="close" class="x" /></div>
      <div class="dnav">
        <Ico n="back" class="b1" /><Ico n="fwd" class="b2" /><Ico n="chev" class="b3" /><Ico n="up" />
        <div class="addr">
          <Ico n="monitor" /><Ico n="gt" /><span v-fit="61">Este equipo</span><Ico n="gt" /><span v-fit="49">Escritorio</span><Ico n="gt" />
          <Ico n="chevBig" class="drop" /><div class="re"><Ico n="refresh" /></div>
        </div>
        <div class="dfind"><Ico n="search" :w="13" /><span v-fit="103">Buscar en Escritorio</span></div>
      </div>
      <div class="dtools">
        <span v-fit="52">Organizar</span><Ico n="tri" /><span v-fit="76" class="nf">Nueva carpeta</span>
        <Ico n="view" class="view" /><Ico n="tri" class="vt" /><Ico n="help" />
      </div>
      <div class="dmain">
        <div class="tree">
          <div v-for="[f, w] in folders" :key="f" class="node"><Ico n="folder" /><span v-fit="w">{{ f }}</span></div>
          <div class="node sel"><Ico n="monitor" /><span v-fit="49">Escritorio</span></div>
        </div>
        <div class="tscroll"><Ico n="chevBig" class="flip" :w="9" /><i></i><Ico n="chevBig" :w="9" /></div>
        <div class="files">
          <figure><Ico n="bigFolder" /><figcaption v-fit="86">fakeSMTP-latest</figcaption></figure>
          <figure class="f2"><Ico n="csv" /><figcaption v-fit="63">Cuentas.csv</figcaption></figure>
        </div>
      </div>
      <div class="dform">
        <div class="field"><label><span v-fit="104">Nombre de archivo:</span></label><div class="in"><span v-fit="43" class="ej">Ejemplo</span><Ico n="chevBig" :w="9" /></div></div>
        <div class="field"><label><span v-fit="26">Tipo:</span></label><div class="in"><span v-fit="184">CSV (delimitado por comas) (*.csv)</span><Ico n="chevBig" :w="9" /></div></div>
        <div class="meta"><span v-fit="44">Autores:</span><a v-fit="109">Alejandro Fernández</a><span v-fit="51" class="et">Etiquetas:</span><a v-fit="111">Agregar una etiqueta</a></div>
        <div class="foot">
          <Ico n="chevBig" class="flip" :w="9" /><span v-fit="86" class="hide">Ocultar carpetas</span>
          <span v-fit="71" class="tools">Herramientas</span><Ico n="tri" />
          <button class="btn main"><span v-fit="43">Guardar</span></button><button class="btn"><span v-fit="46">Cancelar</span></button>
        </div>
      </div>
      <Ico n="grip" class="grip" />
    </section>
  </div>
</template>

<style>
body { margin: 0; overflow: hidden; }
</style>

<style scoped>
* { box-sizing: border-box; }
.screen { position: relative; width: 1366px; height: 768px; overflow: hidden; display: flex; flex-direction: column; background: #2e2e2e; color: #fff; font: 12px/1 "Noto Sans", "Open Sans", sans-serif; }
.screen > * { flex: none; }
span, b, a, figcaption, u, em { white-space: nowrap; line-height: 16px; }
svg { flex: none; display: block; overflow: visible; }
svg :deep(text) { font-family: "Noto Sans", sans-serif; }
.fx :deep(text) { font-family: "Liberation Serif", serif; letter-spacing: .5px; }

.title { height: 48px; display: flex; align-items: center; color: #6e6e6e; font-size: 12px; }
.title > * { flex: none; }
.logo { margin: 0 16px; }
.toggle { width: 42px; height: 20px; margin: -1px 11px 0 7px; padding: 2px; border: 1px solid #707070; border-radius: 10px; background: #4b4b4b; }
.toggle i { display: block; width: 14px; height: 14px; border-radius: 50%; background: #6e6e6e; }
.doc { margin-left: 16px; }
.find { width: 368px; height: 32px; margin-left: 213px; padding-left: 19px; border: 1px solid #555; border-radius: 3px; display: flex; align-items: center; gap: 13px; color: #7c7c7c; }
.mail { margin-left: 141px; }
.avatar { margin-left: 11px; }
.horn { margin: 0 33px 0 27px; }
.wbtn { margin-right: 36px; }

.tabs { height: 30px; padding-left: 9px; display: flex; align-items: center; font-size: 12.500px; }
.tabs > span { height: 26px; line-height: 28px; }
.tabs .on { font-weight: 700; border-bottom: 2px solid #9fd5b5; line-height: 27px; margin-top: 0; }
.actions { margin-left: auto; margin-right: 12px; display: flex; gap: 8px; }
.act { width: 111px; height: 24px; display: flex; align-items: center; padding: 0 0 0 7px; gap: 4px; font: 600 12.500px "Noto Sans", sans-serif; color: #fff; background: #4a4a4a; border: 1px solid #858585; border-radius: 4px; }
.act b { font-weight: 600; line-height: 18px; padding-top: 1px; }
.share { width: 95px; background: #107c41; border-color: #107c41; }

.ribbon { height: 100px; margin: 0 8px; border: 1px solid #7e7e7e; border-radius: 8px; background: #4d4d4d; display: flex; color: #d6d6d6; font-size: 11.500px; }
.ribbon span { color: #fff; }
.grp { position: relative; display: flex; flex-direction: column; flex: none; }
.grp::after { content: ""; position: absolute; right: 0; top: 4px; width: 1px; height: 89px; background: #7e7e7e; }
.body { height: 81px; }
.row { display: flex; }
.grp footer { height: 16px; display: flex; justify-content: center; position: relative; font-size: 11px; }
.grp footer svg { position: absolute; right: 3px; top: 4px; }
.stack { padding-top: 2px; }
.stack > div { height: 26px; display: flex; align-items: center; }
.ribbon svg { color: #d6d6d6; }
.big { display: flex; flex-direction: column; align-items: center; }
.big p { margin: 0; display: flex; align-items: center; gap: 4px; height: 16px; }
.bar { width: 1px; height: 24px; background: #7e7e7e; }
.undo { width: 59px; }
.undo .stack { padding-left: 15px; }
.undo .stack svg + svg { margin-left: 6px; }
.undo .dim svg { color: #8a8a8a; }
.undo footer { padding-left: 3px; }
.clip { width: 100px; }
.clip .big { width: 58px; padding-top: 7px; }
.clip .big span { margin: 3px 0 5px; }
.clip .stack { margin-left: -2px; }
.clip .stack svg + svg { margin-left: 6px; }
.clip footer { padding-right: 17px; }
.font { width: 236px; }
.two { padding-top: 11px; }
.fonts { display: flex; padding-left: 8px; gap: 3px; height: 24px; }
.combo { width: 122px; height: 24px; border: 1px solid #808080; border-radius: 3px; padding: 0 1px 0 2px; display: flex; align-items: center; justify-content: space-between; background: #4a4a4a; }
.combo.small { width: 42px; padding-right: 1px; }
.fonts > svg { margin: 3px 0 0 4px; }
.fonts > svg:last-child { margin-left: 7px; }
.marks { margin: 6px 0 0 7px; height: 26px; display: grid; grid-template-columns: 25px 27px 25px 13px 9px 19px 18px 5px 24px 12px 28px 14px; place-items: center; font-size: 14px; }
.marks em { font-family: "Open Sans", sans-serif; font-size: 13.500px; }
.marks u { font-size: 13px; text-underline-offset: 2px; }
.fc { margin-left: 5px; }
.align { width: 197px; }
.five { margin: 11px 0 0 7px; width: 130px; height: 58px; display: grid; grid-template-columns: repeat(5, 26px); grid-template-rows: 24px 26px; row-gap: 7px; place-items: center; }
.picked { width: 24px; height: 24px; border: 1px solid #9a9a9a; border-radius: 4px; background: #5a5a5a; display: grid; place-items: center; }
.oc { margin-right: 20px; }
.tall { height: 62px; margin: 10px 0 0 5px; }
.wraps { margin: 14px 0 0 10px; }
.wraps > div { display: flex; align-items: center; gap: 6px; margin-top: 14px; }
.align footer { padding-right: 17px; }
.align footer svg { right: 4px; }
.font footer { padding-right: 18px; }
.num { width: 162px; }
.num .combo { width: 146px; margin-left: 8px; }
.nums { margin: 7px 0 0 8px; height: 26px; display: grid; grid-template-columns: 24px 12px 34px 17px 13px 17px 35px; place-items: center; }
.num footer { padding-right: 17px; }
.styles { width: 187px; }
.styles .body, .cellsg .body { padding-top: 3px; font-size: 12px; }
.styles .stack, .cellsg .stack { padding-left: 12px; }
.styles .body span { margin: 0 3px 0 4px; }
.styles footer { padding-right: 2px; }
.cellsg { width: 108px; }
.cellsg .body span { margin: 0 0 0 4px; }
.cellsg footer { padding-right: 2px; }
.cellsg .stack svg:last-child { margin-left: 3px; }
.edit { width: 192px; }
.edit footer { padding-right: 2px; }
.edit .stack { padding-left: 12px; width: 46px; }
.edit .stack svg + svg { margin-left: 4px; }
.edit .stack svg.c1 { margin-left: 6px; }
.sort { width: 64px; padding-top: 9px; }
.sort svg:first-child { margin-bottom: 4px; }
.look { width: 72px; padding-top: 7px; }
.look svg:first-child { margin-bottom: 4px; }
.ana { width: 63px; }
.ana footer { padding-right: 2px; }
.ana .big { padding-top: 4px; padding-right: 2px; }
.ana .big > svg { margin-bottom: 3px; }
.ribbon .fold { margin: 83px 0 0 25px; color: #fff; }

.fbar { height: 41px; padding: 8px 8px 0; display: flex; font-size: 12.500px; }
.box { height: 27px; border: 1px solid #7e7e7e; border-radius: 4px; background: #4d4d4d; display: flex; align-items: center; }
.name { width: 102px; padding: 0 4px 0 6px; justify-content: space-between; }
.name svg, .formula svg { color: #bbb; }
.dots { width: 20px; display: flex; flex-direction: column; align-items: center; padding-top: 8px; gap: 2px; height: 26px; }
.dots i { width: 2px; height: 2px; background: #aaa; }
.fxs { width: 74px; padding-left: 5px; gap: 9px; color: #8a8a8a; }
.formula { width: 1150px; margin-left: 4px; padding: 0 3px 0 11px; justify-content: space-between; }
.formula svg { color: #999; margin-top: -4px; }

.sheet { height: 469px; display: flex; background: #2b2b2b; }
.grid { width: 1346px; height: 469px; overflow: hidden; background: #fff; }
.line { display: flex; height: 20px; width: 1400px; color: #000; font-size: 13.500px; }
.rh { flex: none; width: 26px; height: 20px; background: #2b2b2b; color: #ddd; border-right: 1px solid #a6a6a6; border-bottom: 1px solid #a0a0a0; font-size: 13px; line-height: 21px; text-align: center; }
.rh.sel { background: #666; border-right: 2px solid #217346; }
.head .rh { display: grid; place-items: end; padding: 0 3px 3px 0; }
.ch { flex: none; width: 80px; height: 20px; line-height: 20px; padding-left: 1px; text-align: center; font-size: 13px; background: #2b2b2b; color: #ddd; border-right: 1px solid #999; border-bottom: 1px solid #a0a0a0; }
.ch.sel { background: #666; border-bottom: 2px solid #217346; padding-left: 0; }
.cell { position: relative; flex: none; width: 80px; height: 20px; border-right: 1px solid #dadada; border-bottom: 1px solid #dadada; padding-left: 2px; display: flex; align-items: center; }
.cell span { line-height: 19px; padding-top: 1px; }
.cell.num { justify-content: flex-end; padding-right: 1px; }
.cell.active::before { content: ""; position: absolute; left: -2px; top: -2px; width: 79px; height: 19px; border: 2px solid #217346; }
.cell.active::after { content: ""; position: absolute; left: 77px; top: 16px; width: 5px; height: 5px; border: 1px solid #fff; border-right: 0; border-bottom: 0; background: #217346; z-index: 1; }
.vscroll { width: 20px; height: 469px; background: #2e2e2e; display: flex; flex-direction: column; align-items: center; color: #c8c8c8; }
.vscroll i { width: 10px; height: 421px; border-radius: 5px; background: #c2c2c2; margin: 3px 0 21px; }
.va { transform: rotate(90deg) scale(1.300); margin-top: 6px; }
.vb { transform: rotate(-90deg) scale(1.300); }

.sheets { height: 28px; background: #666; border-top: 1px solid #8a8a8a; display: flex; color: #9a9a9a; }
.sheets > svg { margin: 9px 0 0 28px; }
.sheets > svg + svg { margin-left: 22px; }
.stab { width: 59px; height: 25px; margin-left: 41px; background: #fff; border-bottom: 2px solid #217346; color: #217346; font-size: 13px; display: grid; place-items: center; }
.sheets > .plus { margin: 4px 0 0 32px; color: #fff; }
.split { width: 28px; background: #2e2e2e; margin-left: 596px; }
.split i { display: block; width: 2px; height: 2px; margin: 16px 0 0 13px; background: #ddd; }
.hscroll { width: 513px; height: 17px; margin-top: 4px; background: #383838; border-radius: 8px; display: flex; align-items: center; padding-left: 7px; color: #ccc; }
.hscroll i { width: 450px; height: 9px; border-radius: 5px; background: #c2c2c2; margin: 0 35px 0 4px; }

.status { height: 22px; background: #383838; display: flex; align-items: center; padding-left: 8px; font-size: 11.500px; }
.status span { padding-top: 1px; }
.status > svg { margin: 0 2px 0 18px; }
.views { display: flex; margin-left: 852px; }
.views div { width: 40px; height: 22px; display: grid; place-items: center; }
.views .on { background: #4a4a4a; }
.zoom { display: flex; align-items: center; margin: 0 12px 0 6px; }
.zoom > i { position: relative; width: 8px; height: 1px; background: #fff; }
.zoom .p::after { content: ""; position: absolute; left: 4px; top: -4px; width: 1px; height: 9px; background: #fff; }
.track { width: 100px; height: 13px; margin: 0 5px; background: linear-gradient(#aaa, #aaa) center / 100% 1px no-repeat; display: flex; justify-content: center; align-items: center; }
.track b { width: 5px; height: 12px; background: #b8b8b8; }

.taskbar { height: 30px; display: flex; background: linear-gradient(90deg, #161d2a 0, #1c2428 280px, #1c2a30 600px, #252d32 740px, #3a2a2a 850px, #302c3c 940px, #272f52 1010px, #1c2850 1120px, #101b38 1366px); }
.taskbar > * { flex: none; }
.start { width: 39px; padding-right: 3px; display: grid; place-items: center; }
.app { width: 31px; display: grid; place-items: center; position: relative; }
.slim { width: 29.500px; }
.run::after { content: ""; position: absolute; bottom: 0; left: 4px; width: 22px; height: 2px; background: #ffc0a4; }
.cur { background: linear-gradient(90deg, #5b5b6a 27px, #3c3f58 27px); }
.cur::after { left: 0; width: 30px; }
.tray { display: flex; align-items: center; margin-left: 8px; height: 30px; padding-right: 20px; border-right: 1px solid #56607a; }
.tray svg:nth-child(2) { margin-left: 8px; }
.tray svg:nth-child(3) { margin-left: 8px; }
.tray svg:nth-child(4) { margin-left: 12px; }
.tray svg:nth-child(5) { margin-left: 7px; }
.tray span { margin: 0 16px 0 12px; font-size: 12px; }

.dialog { position: absolute; left: 247px; top: 231px; width: 669px; height: 473px; background: #383838; border: 1px solid #4a4a4a; border-top-color: #333; box-shadow: 2px 5px 16px rgba(0, 0, 0, .45); font-size: 11.500px; }
.dtitle { height: 30px; background: #000; display: flex; align-items: center; padding: 0 0 2px 8px; gap: 5px; }
.x { margin-left: auto; margin-right: 9px; }
.dnav { height: 42px; background: #191919; display: flex; align-items: center; padding-left: 12px; padding-bottom: 2px; }
.b2 { color: #8a8a8a; margin: 0 12px 0 16px; }
.b3 { margin: 0 10px 0 0; }
.addr { width: 335px; height: 30px; margin-left: 6px; padding-left: 2px; border: 1px solid #535353; display: flex; align-items: center; }
.addr svg { color: #9a9a9a; }
.addr > svg:nth-child(2) { margin: 0 9px 0 7px; }
.addr > svg:nth-child(4) { margin: 0 10px 0 8px; }
.addr > svg:nth-child(6) { margin-left: 9px; }
.addr > .drop { margin-left: auto; margin-right: 9px; }
.re { width: 33px; height: 28px; border-left: 1px solid #222; display: grid; place-items: center; }
.dfind { width: 202px; height: 30px; margin-left: 12px; padding-left: 15px; border: 1px solid #535353; display: flex; align-items: center; gap: 12px; color: #7a7a7a; }
.dtools { height: 31px; padding: 0 15px 0 18px; background: #202020; border-bottom: 1px solid #171717; display: flex; align-items: center; gap: 4px; }
.nf { margin-left: 27px; }
.view { margin-left: auto; }
.vt { margin: 0 26px 0 6px; }
.dmain { height: 216px; display: flex; background: #202020; }
.tree { width: 139px; background: #191919; overflow: hidden; }
.node { height: 24px; display: flex; align-items: center; padding-left: 50px; gap: 5px; }
.node span { flex: none; }
.node.sel { width: 138px; height: 22px; margin-top: 1px; padding-left: 40px; background: #333; }
.tscroll { width: 19px; padding-left: 1px; background: #171717; display: flex; flex-direction: column; align-items: center; padding-top: 7px; color: #8a8a8a; border-right: 3px solid #191919; }
.tscroll i { width: 15px; height: 18px; background: #4d4d4d; margin: 146px 0 28px; }
.flip { transform: scaleY(-1); }
.files { flex: 1; display: flex; padding: 8px 0 0 20px; }
figure { margin: 0; width: 96px; display: flex; flex-direction: column; align-items: center; }
figcaption { line-height: 16px; padding-left: 1px; }
.f2 { margin-left: 27px; }
.f2 svg { margin: 4px 0 2px -11px; }
.dform { padding-top: 11px; }
.field { display: flex; height: 24px; margin-bottom: 1px; }
.field label { width: 125px; padding-right: 6px; display: flex; justify-content: flex-end; align-items: center; }
.in { width: 537px; height: 24px; border: 1px solid #949494; background: #333; display: flex; align-items: center; justify-content: space-between; padding: 0 4px 0 3px; color: #fff; }
.in svg { color: #aaa; }
.in .ej { margin: -2px 0 0 2px; }
.meta { display: flex; margin: 8px 0 0 78px; color: #6d6d6d; height: 16px; }
.meta a { color: #0a63c4; margin-left: 11px; }
.meta .et { margin-left: 79px; }
.foot { display: flex; align-items: center; margin-top: 29px; padding-left: 13px; height: 28px; }
.foot > .hide { margin: 6px 0 0 8px; }
.foot > .flip { margin-top: 6px; color: #ccc; }
.tools { margin: 0 16px 0 235px; }
.btn { width: 88px; height: 27px; margin-left: 12px; padding: 0; display: grid; place-items: center; font: 11.500px "Noto Sans", sans-serif; color: #fff; background: #333; border: 1px solid #b8b8b8; outline: 1px solid #888; outline-offset: -2px; }
.btn.main { margin-left: 16px; border: 2px solid #fff; outline: 0; }
.grip { position: absolute; right: 2px; bottom: 1px; }
</style>
